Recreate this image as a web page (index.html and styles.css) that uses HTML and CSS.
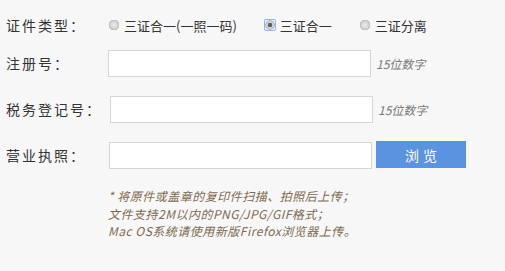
FILE: index.html
```html
<!DOCTYPE html>
<html lang="zh-CN">
  <head>
    <meta charset="UTF-8" />
    <meta name="viewport" content="width=device-width, initial-scale=1.0" />
    <title>证件上传</title>
    <link rel="stylesheet" href="styles.css">
  </head>
  <body>
    <form class="cert-form">
      <div class="form-row">
        <span class="form-label">证件类型：</span>
        <div class="radio-group">
          <label class="radio-item">
            <input type="radio" name="certType" value="one-code" />三证合一(一照一码)
          </label>
          <label class="radio-item">
            <input type="radio" name="certType" value="one" checked />三证合一
          </label>
          <label class="radio-item">
            <input type="radio" name="certType" value="separate" />三证分离
          </label>
        </div>
      </div>

      <div class="form-row">
        <label class="form-label" for="regNo">注册号：</label>
        <input class="text-input" type="text" id="regNo" />
        <span class="hint">15位数字</span>
      </div>

      <div class="form-row">
        <label class="form-label" for="taxNo">税务登记号：</label>
        <input class="text-input text-input--shift" type="text" id="taxNo" />
        <span class="hint">15位数字</span>
      </div>

      <div class="form-row">
        <label class="form-label" for="license">营业执照：</label>
        <input class="text-input text-input--mid" type="text" id="license" readonly />
        <button class="browse-btn" type="button">浏览</button>
      </div>

      <!-- 上传说明 -->
      <p class="notes">
        * 将原件或盖章的复印件扫描、拍照后上传；<br />
        文件支持2M以内的PNG/JPG/GIF格式；<br />
        Mac OS系统请使用新版Firefox浏览器上传。
      </p>
    </form>
  </body>
</html>
```

FILE: styles.css
```css
:root {
  --bg-color: #f7f7f7;
  --text-color: #333;
  --border-color: #d5d5d5;
  --primary-color: #5b93e0;
  --note-color: #7c6a52;
}
body {
  margin: 0;
  background: var(--bg-color);
  color: var(--text-color);
  font-family: "Microsoft YaHei", "Noto Sans CJK SC", "Noto Sans", sans-serif;
  font-size: 14px;
}
.cert-form {
  padding: 12px 0 0 6px;
}
.form-row {
  display: flex;
  align-items: center;
  height: 26px;
  margin-bottom: 20px;
}
.form-row:first-child {
  margin-bottom: 12px;
}
.form-label {
  width: 102px;
  flex-shrink: 0;
  letter-spacing: 2px;
  white-space: nowrap;
  line-height: 26px;
}
.radio-group {
  display: flex;
  align-items: center;
  font-size: 13px;
}
.radio-item {
  display: flex;
  align-items: center;
  margin-right: 27px;
  cursor: pointer;
}
.radio-item input {
  -webkit-appearance: none;
  appearance: none;
  width: 12px;
  height: 12px;
  margin: 0 4px 0 0;
  border-radius: 50%;
  background:
    radial-gradient(circle at 50% 50%, #e9e9e9 0, #d9d9d9 3px, #cfcfcf 4px, #b9b9b9 5px, transparent 5.5px);
  cursor: pointer;
}
.radio-item input:checked {
  border-radius: 2px;
  box-shadow: inset 0 0 0 1px #8fb6f3;
  background:
    radial-gradient(circle at 50% 50%, #555 0, #666 2px, #d6d6d6 2.6px, #cfcfcf 3.6px, #a9a9a9 4.4px, #eaf1fd 5px);
}
.text-input {
  box-sizing: border-box;
  width: 263px;
  height: 27px;
  margin: 0;
  padding: 0 6px;
  border: 1px solid var(--border-color);
  background: #fff;
  font: inherit;
  outline: none;
}
.text-input--shift {
  margin-left: 2px;
}
.text-input--mid {
  margin-left: 1px;
}
.text-input:focus {
  border-color: var(--primary-color);
}
.hint {
  margin-left: 5px;
  color: #777;
  font-size: 12px;
  font-style: italic;
}
.browse-btn {
  width: 90px;
  height: 27px;
  margin: -1px 0 0 4px;
  padding: 0;
  border: none;
  background: var(--primary-color);
  color: #fff;
  font: inherit;
  letter-spacing: 4px;
  text-indent: 4px;
  cursor: pointer;
}
.notes {
  margin: -1px 0 0 102px;
  color: var(--note-color);
  font-size: 12px;
  font-style: italic;
  letter-spacing: 0.5px;
  line-height: 17.5px;
}
```
